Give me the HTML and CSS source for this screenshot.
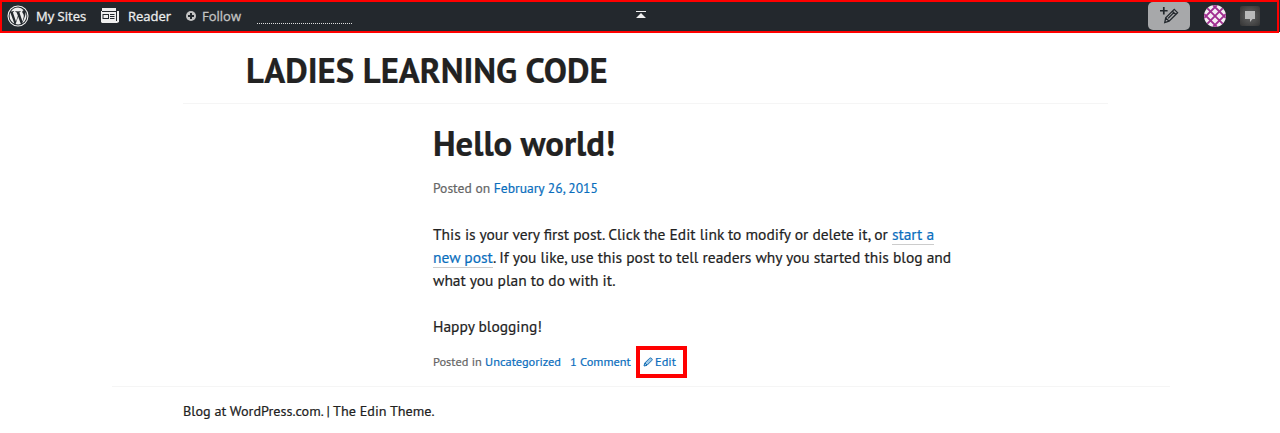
FILE: index.html
```html
<!DOCTYPE html>
<html lang="en">
<head>
<meta charset="utf-8">
<title>Ladies Learning Code</title>
<link rel="stylesheet" href="styles.css">
</head>
<body>
<header class="adminbar">
  <svg class="wp-logo" viewBox="0 0 24 24"><circle cx="12" cy="12" r="10.9" fill="none" stroke="#eee" stroke-width="1.2"/><path fill="#eee" d="M12 2.800c-3.200 0-6 1.600-7.700 4.200h.6c1 0 2.500-.1 2.500-.1.5 0 .6.7.1.8l-1.100.1 3.400 10.200 2.100-6.200-1.500-4-1-.1c-.5 0-.5-.8.1-.8 0 0 1.600.1 2.500.1s2.500-.1 2.500-.1c.5 0 .6.7.1.8l-1.100.1 3.400 10.100.9-3.100c1-2.900.5-4.200-.3-5.500-.7-1-1.200-1.900-.5-2.800.3-.4.7-.7 1.200-.7A9.200 9.200 0 0 0 12 2.800zM2.800 12c0 3.600 2.100 6.800 5.200 8.300L3.600 8.200A9 9 0 0 0 2.800 12zm9.400.8-2.800 8c1.800.5 3.900.5 5.700-.1zm7.900-5.200c.3 1.800-.1 3.400-.7 5.100l-2.800 7.300c4.300-2.600 5.800-8 3.500-12.400z"/></svg>
  <span class="label my-sites">My Sites</span>
  <svg class="reader-icon" viewBox="0 0 18 16"><path fill="#eee" d="M1 0h14v3h3v11l-2 1H1l-1-1V3h1z"/><path fill="#23282d" d="M1 3h14v1H1zM1.500 6H8v1H1.500zM1.500 6h1v5h-1zM1.500 10H8v1H1.500zM7 6h1v5H7zM9 6h4.500v1H9zM9 8h4.500v1H9zM9 10h4.500v1H9zM15 3h1v10h-1z"/></svg>
  <span class="label reader">Reader</span>
  <svg class="follow-icon" viewBox="0 0 10 10"><circle cx="5" cy="5" r="5" fill="#c4c4c4"/><path d="M5 2v6M2 5h6" stroke="#23282d" stroke-width="2"/></svg>
  <span class="label follow">Follow</span>
  <span class="search-line"></span>
  <svg class="collapse" viewBox="0 0 10 8"><path fill="#eee" d="M0 0h10v1H0zM5 2l5 5H0z"/></svg>
  <span class="compose"><svg viewBox="0 0 20 20"><path d="M4 1v8M0 5h8" stroke="#23282d" stroke-width="1.800"/><path d="M5 17.500l1-5L15 3.500l3.500 3.500-9 9zM13 5.500L16.500 9M6 12.500l3.500 3.500M8.500 13l6-6" fill="none" stroke="#23282d" stroke-width="1.400"/></svg></span>
  <svg class="avatar" viewBox="0 0 22 22"><defs><clipPath id="round"><circle cx="11" cy="11" r="11"/></clipPath></defs><g clip-path="url(#round)"><path fill="#f4eff4" d="M0 0h22v22H0z"/><path d="M0 0l22 22M22 0L0 22M9 0l13 13M0 9l13 13M13 0L0 13M22 9L9 22" fill="none" stroke="#a02f90" stroke-width="1.900"/></g></svg>
  <span class="notes"><svg viewBox="0 0 10 11"><path fill="#bbb" d="M0 0h10v8H7.500L5 11V8H0z"/></svg></span>
</header>
<main class="page">
  <h1 class="site-title"><span>LADIES LEARNING CODE</span></h1>
  <article class="post">
    <h2 class="post-title">Hello world!</h2>
    <p class="posted">Posted on <a>February 26, 2015</a></p>
    <p class="copy"><span class="line">This is your very first post. Click the Edit link to modify or delete it, or <a>start a</a></span><span class="line"><a>new post</a>. If you like, use this post to tell readers why you started this blog and</span><span class="line">what you plan to do with it.</span></p>
    <p class="copy happy">Happy blogging!</p>
    <div class="meta"><span class="cat">Posted in <a>Uncategorized</a></span><a class="comments">1 Comment</a><a class="edit"><svg viewBox="0 0 10 10"><path d="M1 9l.8-3L6.500 1.300Q7.500.5 8.700 1.500T8.600 3.700L4 8.300z" fill="#9cc8e8" stroke="#176fb4"/><path d="M2 6l2 2" stroke="#176fb4"/></svg><span>Edit</span></a></div>
  </article>
</main>
<footer class="footer"><span>Blog at WordPress.com. | The Edin Theme.</span></footer>
</body>
</html>
```
FILE: styles.css
```css
* { box-sizing: border-box; }
body { margin: 0; height: 433px; overflow: hidden; background: #fff; color: #222; font: 15.5px/23px "PT Sans", "Noto Sans", sans-serif; white-space: nowrap; -webkit-text-stroke: .2px; }
h1, h2, p { margin: 0; }
a { color: #0a6ebd; }
svg { display: block; flex: none; }
.adminbar { display: flex; align-items: center; width: 1279px; height: 33px; padding-left: 5px; border: 2px solid #f00; background: #23282d; box-shadow: 1px -1px #23282d; color: #eee; font: 13px/20px "Open Sans", sans-serif; -webkit-text-stroke: .3px; }
.label { flex: none; margin-top: -1px; }
.wp-logo { width: 22px; height: 22px; margin-top: -1px; }
.my-sites { width: 65px; margin-left: 7px; }
.reader-icon { width: 18px; height: 16px; margin-top: -1px; }
.reader { width: 58px; margin-left: 9px; }
.follow-icon { width: 10px; height: 10px; margin-top: -1px; }
.follow { width: 40px; margin-left: 6px; color: #c4c4c4; }
.search-line { width: 95px; height: 16px; margin-left: 15px; margin-top: -2px; border-bottom: 1px dotted #ddd; }
.collapse { width: 10px; height: 8px; margin: -3px 0 0 284px; }
.compose { display: flex; align-items: center; justify-content: center; width: 42px; height: 28px; margin: -1px 0 0 502px; border-radius: 5px; background: #a7a8aa; }
.compose svg { width: 19px; height: 19px; margin-top: -1px; }
.avatar { width: 22px; height: 22px; margin: -1px 0 0 14px; }
.notes { display: flex; align-items: center; justify-content: center; width: 20px; height: 20px; margin: -1px 0 0 14px; border-radius: 2px; background: radial-gradient(#666, #333); }
.notes svg { width: 10px; height: 11px; }
.page { width: 925px; margin-left: 183px; }
.site-title { height: 71px; padding: 18px 0 0 63px; border-bottom: 1px solid #f5f5f5; font-size: 34.7px; line-height: 40px; }
.post { height: 282px; padding: 20px 0 0 250px; }
.post-title { font-size: 34.7px; line-height: 40px; }
.posted { padding-top: 13px; font-size: 13.6px; color: #666; }
.copy { padding-top: 23px; }
.line { display: block; }
.copy a { border-bottom: 1px solid #ccc; }
.meta { display: flex; align-items: center; height: 32px; margin-top: 8px; color: #666; font-size: 12.4px; line-height: 21px; }
.cat, .comments { margin-top: -1px; }
.cat { width: 137px; }
.comments { width: 66px; }
.edit { display: flex; align-items: center; width: 51px; height: 32px; padding: 0 0 1px 3px; border: 4px solid #f00; }
.edit svg { width: 10px; height: 10px; margin-right: 2px; }
.footer { width: 1058px; margin-left: 112px; padding: 13px 0 0 71px; border-top: 1px solid #f5f5f5; font-size: 14.2px; }
```
